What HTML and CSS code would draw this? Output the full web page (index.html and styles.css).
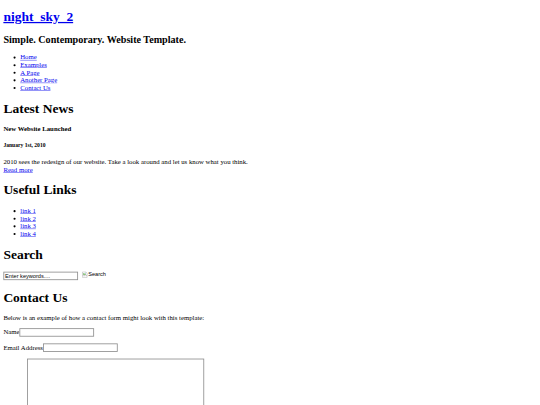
FILE: index.html
```html
<!DOCTYPE html>
<html>
<head>
<meta charset="utf-8">
<title>night_sky_2</title>
<link rel="stylesheet" href="styles.css">
</head>
<body class="doc">
<div class="viewport">
<div class="page">
  <h1 class="logo"><a href="#">night_sky_2</a></h1>
  <h2 class="slogan">Simple. Contemporary. Website Template.</h2>
  <ul class="menu">
    <li><a href="#">Home</a></li>
    <li><a href="#">Examples</a></li>
    <li><a href="#">A Page</a></li>
    <li><a href="#">Another Page</a></li>
    <li><a href="#">Contact Us</a></li>
  </ul>
  <h1 class="section">Latest News</h1>
  <h4 class="news-title">New Website Launched</h4>
  <h5 class="news-date">January 1st, 2010</h5>
  <p class="text">2010 sees the redesign of our website. Take a look around and let us know what you think.<br><a href="#">Read more</a></p>
  <h1 class="section">Useful Links</h1>
  <ul class="links">
    <li><a href="#">link 1</a></li>
    <li><a href="#">link 2</a></li>
    <li><a href="#">link 3</a></li>
    <li><a href="#">link 4</a></li>
  </ul>
  <h1 class="section">Search</h1>
  <form class="search">
    <p class="text"><input class="field" type="text" name="search_field" value="Enter keywords....">
      <span class="imgbtn"><svg class="broken" width="16" height="16" viewBox="0 0 16 16"><path d="M2.5 1.5h8l3 3v4l-2 1.5-2-1.5-2 1.5-2-1.5-3 2z" fill="#fff" stroke="#9a9a9a"/><path d="M3.5 10.5l2-1.5 2 1.5 2-1.5 2 1.5 2-1.5v5.5h-11z" fill="#fff" stroke="#9a9a9a"/><path d="M4 6l2-2 2 2.5 1-1 2 2v0.5l-1-.7-2 1.5-2-1.5-2 1.4z" fill="#5fae4a"/><circle cx="10" cy="4" r="1" fill="#4a86c8"/></svg>Search</span></p>
  </form>
  <h1 class="section">Contact Us</h1>
  <p class="text">Below is an example of how a contact form might look with this template:</p>
  <form class="contact">
    <p class="text">Name<input class="field" type="text" name="your_name"></p>
    <p class="text">Email Address<input class="field" type="text" name="your_email"></p>
    <p class="text">Message<textarea class="message" rows="8" cols="50" name="your_enquiry"></textarea></p>
  </form>
</div>
</div>
</body>
</html>
```

FILE: styles.css
```css
.doc {
  margin: 0;
  overflow: hidden;
  font-family: "Liberation Serif", "Times New Roman", serif;
  background: #ffffff;
  color: #000000;
}

.viewport {
  display: flow-root;
  width: 1280px;
  transform: scale(0.421875);
  transform-origin: 0 0;
}

.page {
  margin: 8px;
  font-family: "Liberation Serif", "Times New Roman", serif;
  font-size: 16px;
}

.logo a,
.menu a,
.links a,
.text a {
  color: #0000ee;
}

.field {
  box-sizing: border-box;
  width: 177px;
  height: 20px;
  padding: 1px 2px;
  border: 2px solid #8f8f8f;
  border-radius: 0;
  font-family: "Liberation Sans", Arial, sans-serif;
  font-size: 13.3333px;
  color: #000000;
  background: #ffffff;
}

.message {
  box-sizing: border-box;
  width: 420px;
  height: 150px;
  padding: 2px;
  border: 2px solid #8f8f8f;
  border-radius: 0;
  font-family: "Liberation Mono", "Courier New", monospace;
  font-size: 13.3333px;
  background: #ffffff;
}

.imgbtn {
  display: inline-flex;
  align-items: flex-start;
  margin-left: 4px;
  font-family: "Liberation Sans", Arial, sans-serif;
  font-size: 13.3333px;
  color: #000000;
  vertical-align: baseline;
}

.broken {
  display: block;
  flex: none;
}
```
